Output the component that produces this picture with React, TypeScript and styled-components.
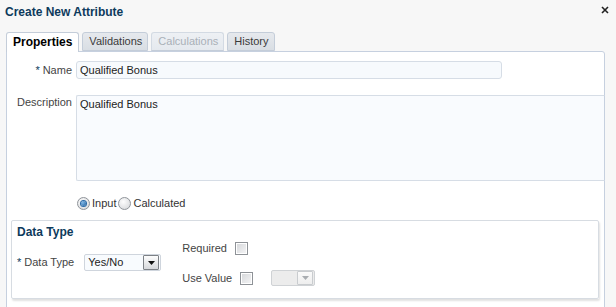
import React from 'react';
import styled, { createGlobalStyle } from 'styled-components';

const GlobalStyle = createGlobalStyle`
  html, body {
    margin: 0;
    padding: 0;
    background: #f7f7f7;
    overflow: hidden;
  }
  body {
    font-family: "Liberation Sans", Arial, sans-serif;
    font-size: 11px;
    color: #333;
  }
`;

const Dialog = styled.div`
  width: 616px;
  height: 307px;
  overflow: hidden;
  box-sizing: border-box;
  background: #f7f7f7;
`;

const Header = styled.div`
  display: flex;
  align-items: center;
  justify-content: space-between;
  height: 24px;
  padding: 0 5px;
`;

const Title = styled.h1`
  margin: -1px 0 0;
  color: #0d3a5c;
  font-size: 12px;
  font-weight: bold;
  line-height: 14px;
`;

const CloseButton = styled.button`
  display: flex;
  align-items: center;
  justify-content: center;
  width: 12px;
  height: 12px;
  padding: 0;
  margin-top: -5px;
  border: none;
  background: none;
  cursor: pointer;
`;

const TabBar = styled.div`
  display: flex;
  align-items: flex-end;
  gap: 3px;
  height: 26px;
  padding-left: 6px;
  margin-top: 1px;
`;

const Tab = styled.div<{ $active?: boolean; $disabled?: boolean }>`
  position: relative;
  z-index: ${(p) => (p.$active ? 1 : 0)};
  box-sizing: border-box;
  height: ${(p) => (p.$active ? '20px' : '19px')};
  margin-bottom: ${(p) => (p.$active ? '-1px' : '0')};
  padding: ${(p) => (p.$active ? '0 6px' : '0 5px 0 6px')};
  border: 1px solid ${(p) => (p.$disabled ? '#d3dae3' : '#c4cdd9')};
  border-bottom: ${(p) => (p.$active ? 'none' : '1px solid #c4cdd9')};
  border-radius: 3px 3px 0 0;
  background: ${(p) =>
    p.$active ? '#fff' : p.$disabled ? 'linear-gradient(#edf0f4, #e5e9ee)' : 'linear-gradient(#e6e9ed, #d9dee4)'};
  color: ${(p) => (p.$active ? '#000' : p.$disabled ? '#a9b0b8' : '#3a3a3a')};
  font-size: ${(p) => (p.$active ? '12px' : '11px')};
  font-weight: ${(p) => (p.$active ? 'bold' : 'normal')};
  line-height: ${(p) => (p.$active ? '18px' : '17px')};
  white-space: nowrap;
`;

const Panel = styled.div`
  box-sizing: border-box;
  width: 599px;
  height: 262px;
  margin-left: 6px;
  padding-top: 9px;
  border: 1px solid #c6d0df;
  border-radius: 0 3px 0 0;
  background: #fff;
`;

const FieldRow = styled.div<{ $top?: boolean }>`
  display: grid;
  grid-template-columns: 65px 1fr;
  column-gap: 4px;
  align-items: ${(p) => (p.$top ? 'start' : 'center')};
  margin-bottom: 16px;
`;

const Label = styled.label<{ $top?: boolean }>`
  text-align: right;
  color: #444;
  line-height: 13px;
  padding-top: ${(p) => (p.$top ? '1px' : '0')};
  white-space: nowrap;
`;

const Required = styled.span`
  color: #0d3a5c;
  margin-right: 3px;
`;

const TextInput = styled.div`
  box-sizing: border-box;
  width: 426px;
  height: 18px;
  padding: 0 3px;
  border: 1px solid #d6dde6;
  border-radius: 3px;
  background: #f7fafd;
  color: #222;
  line-height: 16px;
`;

const TextArea = styled.div`
  box-sizing: border-box;
  width: 529px;
  height: 86px;
  margin-right: -1px;
  padding: 2px 3px;
  border: 1px solid #d6dde6;
  border-right-color: #c6d0df;
  border-radius: 2px 0 0 2px;
  background: #f9fbfe;
  color: #222;
  line-height: 13px;
`;

const RadioGroup = styled.div`
  display: flex;
  align-items: center;
  gap: 2px;
  margin: 1px 0 10px 70px;
`;

const RadioOption = styled.label`
  display: flex;
  align-items: center;
  gap: 2px;
  color: #333;
  line-height: 13px;
`;

const RadioDot = styled.span<{ $checked?: boolean }>`
  display: inline-flex;
  align-items: center;
  justify-content: center;
  box-sizing: border-box;
  width: 13px;
  height: 13px;
  border: 1px solid #8f949a;
  border-radius: 50%;
  background: radial-gradient(circle at 40% 35%, #fdfdfd, #d2d4d7);

  &::after {
    content: '';
    display: ${(p) => (p.$checked ? 'block' : 'none')};
    width: 5px;
    height: 5px;
    border-radius: 50%;
    background: radial-gradient(circle at 35% 35%, #7fb6e6, #1e5f9c);
    box-shadow: 0 0 0 1px #2a6aa8;
  }
`;

const Section = styled.fieldset`
  box-sizing: border-box;
  width: 588px;
  height: 79px;
  margin: 0 0 0 4px;
  padding: 4px 5px 0;
  border: 1px solid #d7dce2;
  border-radius: 2px;
  background: #fff;
  box-shadow: 1px 2px 2px rgba(0, 0, 0, 0.12);
`;

const SectionTitle = styled.h2`
  margin: 0;
  color: #0d3a5c;
  font-size: 12px;
  font-weight: bold;
  line-height: 14px;
`;

const SectionBody = styled.div`
  display: flex;
  align-items: center;
  gap: 21px;
`;

const InlineField = styled.div`
  display: flex;
  align-items: center;
  gap: 10px;
`;

const CheckColumn = styled.div`
  display: flex;
  flex-direction: column;
  gap: 15px;
  padding-top: 3px;
`;

const CheckRow = styled.div`
  display: flex;
  align-items: center;
  gap: 8px;
  color: #444;
  line-height: 13px;
`;

const Checkbox = styled.span`
  display: inline-block;
  box-sizing: border-box;
  width: 13px;
  height: 13px;
  border: 1px solid #8e9297;
  background: linear-gradient(135deg, #d4d6d9, #f6f6f7);
  box-shadow: inset 0 0 0 1px #fff;
`;

const Select = styled.div<{ $width: number }>`
  display: flex;
  align-items: center;
  justify-content: space-between;
  box-sizing: border-box;
  width: ${(p) => p.$width}px;
  height: 17px;
  padding: 0 1px 0 3px;
  border: 1px solid #cfd5dd;
  border-radius: 2px;
  background: #f8fbfe;
  color: #222;
  line-height: 15px;
`;

const DisabledSelect = styled(Select)`
  height: 16px;
  margin-left: 10px;
  border-color: #cfd2d5;
  background: #ececec;
`;

const SelectButton = styled.span<{ $disabled?: boolean }>`
  display: flex;
  align-items: center;
  justify-content: center;
  box-sizing: border-box;
  width: 16px;
  height: ${(p) => (p.$disabled ? '14px' : '15px')};
  border: 1px solid ${(p) => (p.$disabled ? '#c9cccf' : '#7d8186')};
  border-radius: 1px;
  background: ${(p) => (p.$disabled ? 'linear-gradient(#fafafa, #eeeeee)' : 'linear-gradient(#fdfdfd, #d6d8db)')};
`;

const Arrow = ({ color }: { color: string }) => (
  <svg width="7" height="4" viewBox="0 0 7 4">
    <path d="M0 0h7L3.5 4z" fill={color} />
  </svg>
);

const CloseIcon = () => (
  <svg width="8" height="8" viewBox="0 0 8 8">
    <path d="M1 1l6 6M7 1L1 7" stroke="#222" strokeWidth="1.6" />
  </svg>
);

export default function App() {
  return (
    <Dialog>
      <GlobalStyle />
      <Header>
        <Title>Create New Attribute</Title>
        <CloseButton aria-label="Close">
          <CloseIcon />
        </CloseButton>
      </Header>

      <TabBar>
        <Tab $active>Properties</Tab>
        <Tab>Validations</Tab>
        <Tab $disabled>Calculations</Tab>
        <Tab>History</Tab>
      </TabBar>

      <Panel>
        <FieldRow>
          <Label>
            <Required>*</Required>Name
          </Label>
          <TextInput>Qualified Bonus</TextInput>
        </FieldRow>

        <FieldRow $top>
          <Label $top>Description</Label>
          <TextArea>Qualified Bonus</TextArea>
        </FieldRow>

        <RadioGroup>
          <RadioOption>
            <RadioDot $checked />
            Input
          </RadioOption>
          <RadioOption>
            <RadioDot />
            Calculated
          </RadioOption>
        </RadioGroup>

        <Section>
          <SectionTitle>Data Type</SectionTitle>
          <SectionBody>
            <InlineField>
              <Label>
                <Required>*</Required>Data Type
              </Label>
              <Select $width={77}>
                Yes/No
                <SelectButton>
                  <Arrow color="#111" />
                </SelectButton>
              </Select>
            </InlineField>
            <CheckColumn>
              <CheckRow>
                Required
                <Checkbox />
              </CheckRow>
              <CheckRow>
                Use Value
                <Checkbox />
                <DisabledSelect $width={44}>
                  <span />
                  <SelectButton $disabled>
                    <Arrow color="#a9adb1" />
                  </SelectButton>
                </DisabledSelect>
              </CheckRow>
            </CheckColumn>
          </SectionBody>
        </Section>
      </Panel>
    </Dialog>
  );
}
